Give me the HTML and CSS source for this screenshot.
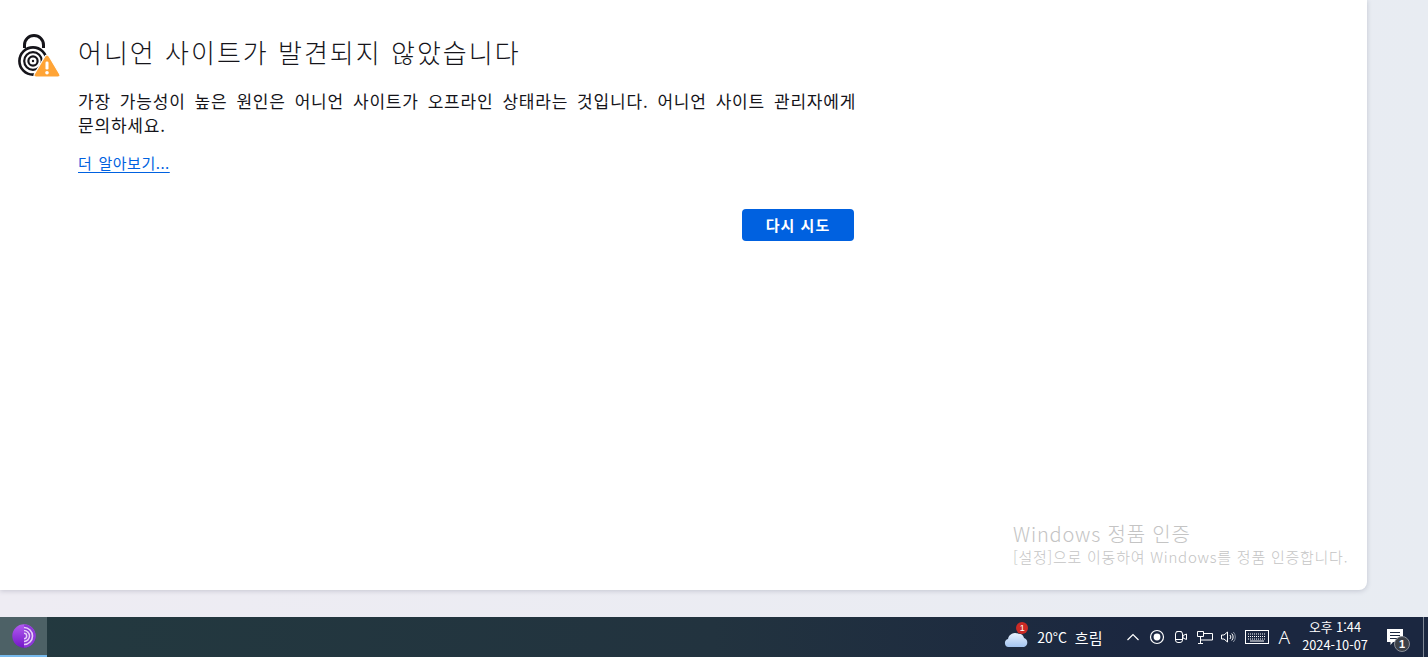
FILE: index.html
```html
<!DOCTYPE html>
<html lang="ko">
<head>
<meta charset="utf-8">
<title>어니언 사이트가 발견되지 않았습니다</title>
<link rel="stylesheet" href="styles.css">
</head>
<body>
<main class="stage">
  <section class="card">
    <div class="error">
      <svg class="lock" viewBox="0 0 44 44" width="44" height="44" aria-hidden="true">
        <path d="M6.5 14 V11 a9.5 9.5 0 0 1 19 0 V14" fill="none" stroke="#15141a" stroke-width="3"/>
        <circle cx="15" cy="27" r="13.6" fill="none" stroke="#15141a" stroke-width="2.6"/>
        <circle cx="15" cy="27" r="8.8" fill="none" stroke="#15141a" stroke-width="2.2"/>
        <circle cx="15" cy="27" r="4.6" fill="none" stroke="#15141a" stroke-width="2.2"/>
        <circle cx="15" cy="27" r="1.2" fill="#15141a"/>
        <path d="M29 21 Q30.5 21 31.5 23 L41.6 40 Q43 43 39.8 43 H18.2 Q15 43 16.4 40 L26.5 23 Q27.5 21 29 21 Z" fill="#ffa436" stroke="#fff" stroke-width="1.2"/>
        <rect x="27.5" y="27.5" width="3" height="8" rx="1.3" fill="#fff"/>
        <circle cx="29" cy="38.8" r="1.8" fill="#fff"/>
      </svg>
      <div class="body">
        <h1 class="title">어니언 사이트가 발견되지 않았습니다</h1>
        <p class="desc">가장 가능성이 높은 원인은 어니언 사이트가 오프라인 상태라는 것입니다. 어니언 사이트 관리자에게 문의하세요.</p>
        <a class="more" href="#">더 알아보기...</a>
        <div class="actions"><button class="retry">다시 시도</button></div>
      </div>
    </div>
    <div class="watermark">
      <div class="wm-title">Windows 정품 인증</div>
      <div class="wm-sub">[설정]으로 이동하여 Windows를 정품 인증합니다.</div>
    </div>
  </section>
</main>
<footer class="taskbar">
  <div class="start">
    <svg viewBox="0 0 24 24" width="24" height="24" aria-hidden="true">
      <defs><linearGradient id="tor" x1="0" y1="0" x2="0" y2="1"><stop offset="0" stop-color="#b25bf0"/><stop offset="1" stop-color="#7417c9"/></linearGradient></defs>
      <circle cx="12" cy="12" r="11.7" fill="url(#tor)"/>
      <path d="M12 .5 A11.5 11.5 0 0 1 12 23.5 Z" fill="#8d3ad6"/>
      <g fill="none" stroke="#e6cdf8">
        <path d="M12 3.5 A8.5 8.5 0 0 1 12 20.5" stroke-width="1.6"/>
        <path d="M12 6.5 A5.5 5.5 0 0 1 12 17.5" stroke-width="1.5"/>
        <path d="M12 9.3 A2.7 2.7 0 0 1 12 14.7" stroke-width="1.5"/>
      </g>
    </svg>
  </div>
  <div class="spacer"></div>
  <div class="weather">
    <span class="cloud">
      <svg viewBox="0 0 26 18" width="25" height="17" aria-hidden="true">
        <defs><linearGradient id="cl" x1="0" y1="0" x2="0" y2="1"><stop offset="0" stop-color="#e8f1fd"/><stop offset="1" stop-color="#a3c4f0"/></linearGradient></defs>
        <path d="M4.5 17 a4.4 4.4 0 0 1 -.5 -8.6 a7.5 7.5 0 0 1 11 -5.4 a6 6 0 0 1 6 4.5 a5 5 0 0 1 0 9.5 Z" fill="url(#cl)"/>
      </svg>
      <span class="badge">1</span>
    </span>
    <span class="temp">20°C</span>
    <span class="cond">흐림</span>
  </div>
  <div class="tray">
    <svg class="ti" viewBox="0 0 14 14" width="14" height="14"><path d="M1.5 10 L7 4.5 L12.5 10" fill="none" stroke="#fff" stroke-width="1.2"/></svg>
    <svg class="ti" viewBox="0 0 16 16" width="16" height="16"><circle cx="8" cy="8" r="6.5" fill="none" stroke="#fff" stroke-width="1.2"/><circle cx="8" cy="8" r="3.4" fill="#fff"/></svg>
    <svg class="ti" viewBox="0 0 14 16" width="14" height="16"><path d="M2.5 2.5 H7.5 M1.5 5 V11 a2.5 2.5 0 0 0 2.5 2.5 H6 a2.5 2.5 0 0 0 2.5 -2.5 V5 a2.5 2.5 0 0 0 -2.5 -2.5 H4 a2.5 2.5 0 0 0 -2.5 2.5" fill="none" stroke="#fff" stroke-width="1"/><path d="M1.5 10.5 H8.5" stroke="#fff"/><path d="M9 6.5 L12.5 5 V10.5 L9 9 Z" fill="none" stroke="#fff"/></svg>
    <svg class="ti" viewBox="0 0 16 16" width="16" height="16"><path d="M.5 2.5 H6.5 V7.5 H.5 Z M6.5 4.5 H15.5 V11 H3.5 V7.5 M3.5 11 V14.5 M1 14.5 H6" fill="none" stroke="#fff" stroke-width="1"/></svg>
    <svg class="ti vol" viewBox="0 0 16 16" width="16" height="16"><path d="M1.5 6 H4 L7.5 3 V13 L4 10 H1.5 Z" fill="none" stroke="#fff"/><path d="M10 6 a3 3 0 0 1 0 4 M11.7 4.5 a5 5 0 0 1 0 7" fill="none" stroke="#fff"/><path d="M13.3 3 a7.2 7.2 0 0 1 0 10" fill="none" stroke="#8a93a3"/></svg>
    <svg class="kbd" viewBox="0 0 24 14" width="24" height="14"><rect x=".5" y=".5" width="23" height="13" fill="none" stroke="#fff"/><path d="M3 4 H21 M3 6.5 H21 M3 9 H21" stroke="#fff" stroke-dasharray="1 1"/><path d="M5 11 H19" stroke="#fff"/></svg>
    <span class="ime">A</span>
  </div>
  <div class="clock">
    <div>오후 1:44</div>
    <div>2024-10-07</div>
  </div>
  <div class="notify">
    <svg viewBox="0 0 18 18" width="18" height="18"><path d="M0 0 H16 V13 H6 L3.5 16 V13 H0 Z" fill="#fff"/><path d="M3 3.5 H13 M3 6.5 H13 M3 9.5 H10" stroke="#1b2740" stroke-width="1.1"/></svg>
    <span class="nbadge">1</span>
  </div>
  <div class="showdesk"></div>
</footer>
</body>
</html>
```
FILE: styles.css
```css
* { box-sizing: border-box; }
html, body { margin: 0; height: 100%; overflow: hidden; }
body {
  display: flex;
  flex-direction: column;
  background: linear-gradient(90deg, #eeecf3, #e8ecf2);
  font-family: "Noto Sans CJK KR", "Liberation Sans", sans-serif;
}
.stage { height: 617px; flex: none; }
.card {
  position: relative;
  width: 1367px;
  height: 590px;
  background: #fff;
  border-bottom-right-radius: 8px;
  box-shadow: 0 1px 5px rgba(60, 65, 90, .22);
}
.error { display: flex; padding: 34px 0 0 18px; }
.lock { flex: none; margin: 0 16px 0 0; overflow: visible; }
.body { width: 776px; }
.title {
  margin: 0;
  font-size: 26px;
  font-weight: 300;
  letter-spacing: 2px;
  line-height: 36px;
  color: #15141a;
  white-space: nowrap;
}
.desc {
  margin: 19px -6px 0 0;
  font-size: 17px;
  font-weight: 400;
  letter-spacing: .8px;
  word-spacing: 3.4px;
  line-height: 24px;
  color: #15141a;
}
.more {
  display: inline-block;
  margin-top: 16px;
  font-size: 15px;
  letter-spacing: .5px;
  word-spacing: 1.5px;
  line-height: 20px;
  color: #0061e0;
  text-decoration: underline;
  text-underline-offset: 3px;
}
.actions { display: flex; justify-content: flex-end; margin-top: 35px; }
.retry {
  width: 112px;
  height: 32px;
  border: 0;
  border-radius: 4px;
  padding: 0 0 2px;
  background: #0061e0;
  color: #fff;
  font: 700 15px "Noto Sans CJK KR", sans-serif;
  letter-spacing: 1px;
}
.watermark {
  position: absolute;
  left: 1013px;
  top: 522px;
  color: #c4c4c4;
  white-space: nowrap;
}
.wm-title { font-size: 20px; line-height: 24px; font-weight: 300; letter-spacing: .8px; }
.wm-sub { font-size: 15px; line-height: 22px; font-weight: 300; letter-spacing: .75px; }
.taskbar {
  height: 40px;
  flex: none;
  display: flex;
  align-items: center;
  color: #fff;
  background: linear-gradient(90deg, #23393f 0%, #22333f 50%, #1b2740 80%, #1b2740 100%);
}
.start {
  width: 47px;
  height: 40px;
  display: flex;
  align-items: center;
  justify-content: center;
  background: #4d6166;
  border-bottom: 2px solid #76b9ed;
}
.spacer { flex: 1; }
.weather { display: flex; align-items: center; }
.cloud { position: relative; display: flex; width: 25px; margin-top: 4px; }
.badge {
  position: absolute;
  left: 12px;
  top: -9px;
  width: 12px;
  height: 12px;
  border-radius: 50%;
  background: #cc2a25;
  font: 9px/12px "Liberation Sans", sans-serif;
  text-align: center;
}
.temp { margin-left: 8px; font-size: 14px; }
.cond { margin-left: 8px; font-size: 15px; }
.tray { display: flex; align-items: center; gap: 9px; margin-left: 24px; }
.vol { margin-left: -2px; }
.kbd { margin-left: 0; }
.ime { margin-left: 0; font: 300 19px "Noto Sans", sans-serif; }
.clock {
  width: 80px;
  margin-left: 5px;
  margin-top: -2px;
  text-align: center;
  font-size: 12.8px;
  line-height: 18px;
}
.notify { position: relative; display: flex; width: 18px; margin-left: 12px; margin-top: 1px; }
.nbadge {
  position: absolute;
  left: 7px;
  top: 7px;
  width: 16px;
  height: 16px;
  border-radius: 50%;
  background: #3c4048;
  border: 1px solid #8a8f98;
  font: 700 11px/14px "Liberation Sans", sans-serif;
  text-align: center;
}
.showdesk { width: 5px; height: 40px; margin-left: 18px; border-left: 1px solid #7e8694; }
```
